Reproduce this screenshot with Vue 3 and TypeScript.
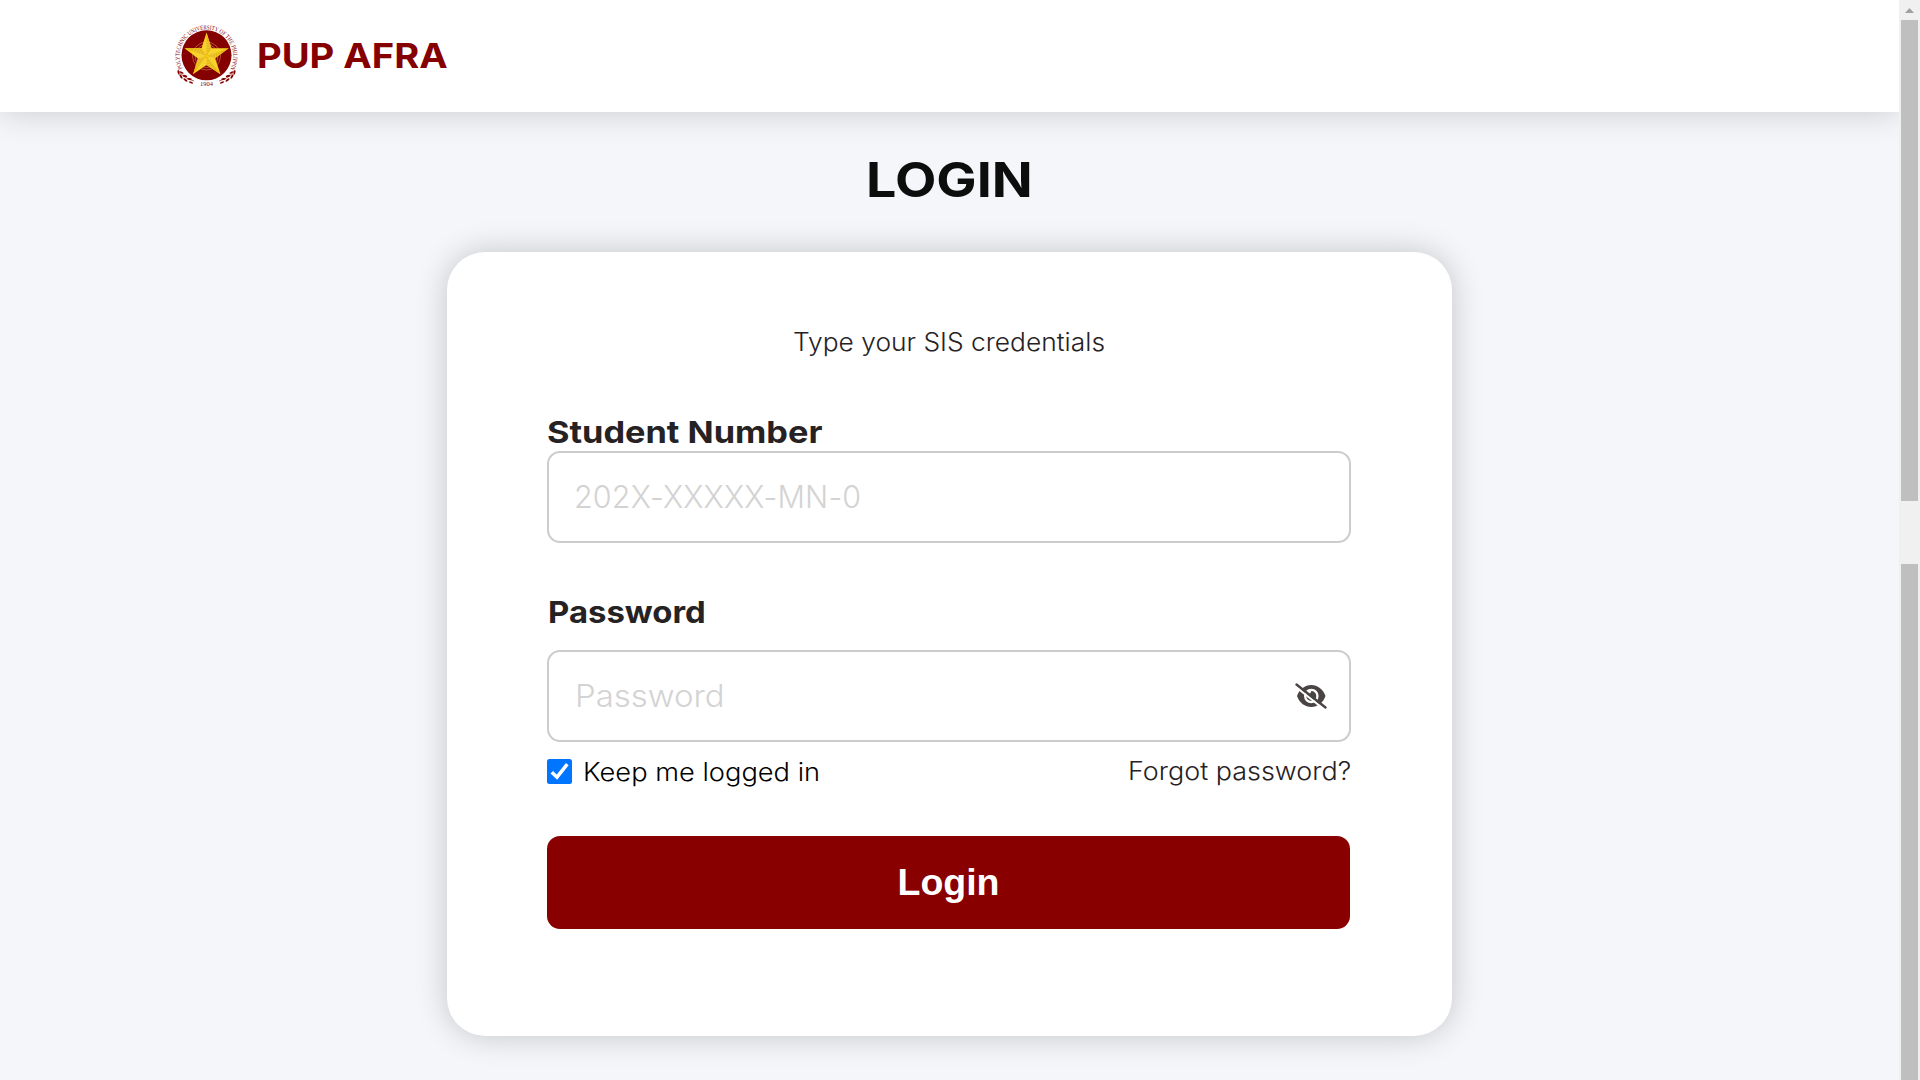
<script setup lang="ts">
import { ref } from 'vue'

const studentNumber = ref('')
const password = ref('')
const keepLoggedIn = ref(true)

// concentric rings laid over the star of the seal
const rings: number[] = [4, 6.5, 9, 11.5, 14]
</script>

<template>
  <div class="window">
    <div class="page">
      <header class="topbar">
        <svg class="seal" viewBox="0 0 66 66" width="66" height="66">
          <defs>
            <path id="seal-arc" d="M9.5 46.500 A26.900 26.900 0 1 1 57.500 46.500" />
            <g id="laurel">
              <path d="M5 48Q10 56 21 59" fill="none" stroke="#850000" stroke-width=".6" />
              <ellipse cx="5.500" cy="50.500" rx="2.300" ry=".9" transform="rotate(75 5.500 50.500)" />
              <ellipse cx="8.500" cy="50.500" rx="2.300" ry=".9" transform="rotate(25 8.500 50.500)" />
              <ellipse cx="8" cy="54.500" rx="2.500" ry="1" transform="rotate(60 8 54.500)" />
              <ellipse cx="12" cy="54" rx="2.400" ry="1" transform="rotate(15 12 54)" />
              <ellipse cx="12.500" cy="58" rx="2.500" ry="1" transform="rotate(40 12.500 58)" />
              <ellipse cx="16.500" cy="57" rx="2.400" ry="1" transform="rotate(5 16.500 57)" />
              <ellipse cx="18" cy="60.500" rx="2.200" ry=".9" transform="rotate(20 18 60.500)" />
            </g>
          </defs>
          <circle cx="33.500" cy="33.300" r="25" fill="#850000" />
          <text class="seal-text">
            <textPath href="#seal-arc" textLength="116" lengthAdjust="spacingAndGlyphs">POLYTECHNIC UNIVERSITY OF THE PHILIPPINES</textPath>
          </text>
          <path d="M33.500 10.500 38.500 26.200 55.700 26.300 42.100 36.300 47.500 52.200 33.500 43 20 52.200 25 36.500 11.500 26.300 28.500 26.200z" fill="#f8d21c" />
          <path d="M33.500 10.500V34L38.500 26.200zM55.700 26.300 33.500 34 42.100 36.300zM47.500 52.200 33.500 34V43zM20 52.200 33.500 34 25 36.500zM11.500 26.300 33.500 34 28.500 26.200z" fill="#e8b814" />
          <circle v-for="r in rings" :key="r" cx="33.500" cy="34" :r="r" fill="none" stroke="#f5e08a" stroke-opacity=".55" stroke-width=".7" />
          <use href="#laurel" fill="#850000" />
          <use href="#laurel" transform="translate(67 0) scale(-1 1)" fill="#850000" />
          <text class="seal-year" x="33.500" y="64" text-anchor="middle" textLength="13" lengthAdjust="spacingAndGlyphs">1904</text>
        </svg>
        <span class="brand">PUP AFRA</span>
      </header>

      <main class="content">
        <h1 class="title">LOGIN</h1>
        <form class="card" @submit.prevent>
          <p class="hint">Type your SIS credentials</p>

          <label class="label label-student" for="student">Student Number</label>
          <div class="field">
            <input id="student" v-model="studentNumber" class="input student" type="text" placeholder="202X-XXXXX-MN-0" />
          </div>

          <label class="label label-password" for="password">Password</label>
          <div class="field">
            <input id="password" v-model="password" class="input pass" type="password" placeholder="Password" />
            <svg class="eye" viewBox="0 0 32 26" width="32" height="26">
              <path fill="#4a4444" fill-rule="evenodd" d="M2 13C4.500 6 10 2 16.300 2S28 6 30.500 13C28 20 22.500 24 16.300 24S4.500 20 2 13zM9 13a7.300 7.300 0 1 0 14.600 0 7.300 7.300 0 1 0-14.600 0z" />
              <path fill="#4a4444" d="M16.300 8a5 5 0 1 1-5 5l1-2.500a2.300 2.300 0 0 0 3.500-1z" />
              <path d="M.5 3.500 30 27" stroke="#fff" stroke-width="2.200" />
              <path d="M1.500 1.500 30.500 24.500" stroke="#4a4444" stroke-width="2.300" stroke-linecap="round" />
            </svg>
          </div>

          <div class="options">
            <label class="keep">
              <input v-model="keepLoggedIn" class="native" type="checkbox" />
              <svg class="check" viewBox="0 0 25 25" width="25" height="25">
                <rect width="25" height="25" rx="2.500" fill="#0075ff" />
                <path v-if="keepLoggedIn" d="M4.800 13.200 10 18.200 20.300 5.200" fill="none" stroke="#fff" stroke-width="3.500" />
              </svg>
              <span class="keep-text">Keep me logged in</span>
            </label>
            <a class="forgot">Forgot password?</a>
          </div>

          <button class="submit" type="submit">Login</button>
        </form>
      </main>
    </div>

    <div class="scrollbar">
      <div class="arrow"><svg width="9" height="5" viewBox="0 0 9 5"><path d="M4.500 0 9 5H0z" fill="#a0a0a0" /></svg></div>
      <div class="thumb"></div>
      <div class="thumb lower"></div>
    </div>
  </div>
</template>

<style>
body {
  margin: 0;
  overflow: hidden;
}
</style>

<style scoped>
.window {
  display: flex;
  width: 1920px;
  height: 1080px;
  overflow: hidden;
  font-family: Inter, "Open Sans", sans-serif;
}
.page {
  width: 1899px;
  height: 1080px;
  overflow: hidden;
  background: #f4f6fa;
}
.topbar {
  display: flex;
  align-items: center;
  box-sizing: border-box;
  height: 112px;
  padding: 0 0 2px 173px;
  background: #fff;
  box-shadow: 0 0 32px rgba(0, 0, 0, 0.18);
}
.seal {
  flex: none;
  overflow: visible;
}
.seal-text {
  font: 6.2px "Liberation Serif", serif;
  fill: #850000;
}
.seal-year {
  font: 7px "Liberation Serif", serif;
  fill: #850000;
}
.brand {
  margin: 2px 0 0 18px;
  font-size: 34.500px;
  font-weight: 700;
  line-height: 44px;
  color: #850000;
  transform: scaleX(1.105);
  transform-origin: left;
}
.content {
  display: flex;
  flex-direction: column;
  align-items: center;
}
.title {
  margin: 37px 0 42px;
  font-size: 48px;
  font-weight: 700;
  line-height: 61px;
  color: #0d0d0d;
  transform: scaleX(1.12);
}
.card {
  display: flex;
  flex-direction: column;
  box-sizing: border-box;
  width: 1005px;
  height: 784px;
  padding: 70px 101px 0 100px;
  border-radius: 38px;
  background: #fff;
  box-shadow: 0 0 32px rgba(0, 0, 0, 0.2);
}
.hint {
  margin: 0;
  font-size: 25px;
  font-weight: 300;
  line-height: 40px;
  text-align: center;
  color: #262223;
  transform: scaleX(1.054);
}
.label {
  align-self: flex-start;
  font-size: 30.500px;
  font-weight: 700;
  line-height: 38px;
  color: #262223;
  transform-origin: left;
}
.label-student {
  margin-top: 51px;
  transform: scaleX(1.125);
}
.label-password {
  margin: 50px 0 19px 1px;
  transform: scaleX(1.078);
}
.field {
  display: flex;
  align-items: center;
  box-sizing: border-box;
  height: 92px;
  padding: 0 22px 0 26px;
  border: 2px solid #ccc;
  border-radius: 13px;
  background: #fff;
}
.input {
  flex: 1;
  min-width: 0;
  height: 44px;
  margin-bottom: 1px;
  padding: 0;
  border: 0;
  outline: 0;
  background: none;
  font-family: inherit;
  font-size: 30.500px;
  font-weight: 300;
}
.student {
  margin-left: -1px;
  letter-spacing: 0.15px;
}
.pass {
  transform: scaleX(1.08);
  transform-origin: left;
}
.input::placeholder {
  color: #d3d3d3;
  opacity: 1;
}
.eye {
  flex: none;
}
.options {
  display: flex;
  justify-content: space-between;
  height: 60px;
  font-size: 25px;
  font-weight: 300;
  line-height: 30px;
}
.keep {
  display: flex;
  align-items: center;
  height: 30px;
  margin-top: 14px;
  color: #000;
}
.keep-text {
  margin-top: 2px;
  transform: scaleX(1.09);
  transform-origin: left;
}
.native {
  display: none;
}
.check {
  flex: none;
  margin-right: 11px;
}
.forgot {
  margin-top: 14px;
  color: #262223;
  transform: scaleX(1.077);
  transform-origin: right;
}
.submit {
  height: 93px;
  margin: 34px 1px 0 0;
  border: 0;
  border-radius: 13px;
  background: #880000;
  color: #fff;
  font: 700 37.500px "Liberation Sans", sans-serif;
}
.scrollbar {
  display: flex;
  flex-direction: column;
  align-items: center;
  width: 21px;
  height: 1080px;
  box-sizing: border-box;
  padding-right: 1px;
  background: #f0f0f0;
}
.arrow {
  display: flex;
  align-items: center;
  height: 20px;
}
.thumb {
  width: 17px;
  height: 481px;
  background: #bfbfbf;
}
.lower {
  height: 516px;
  margin-top: 63px;
}
</style>
